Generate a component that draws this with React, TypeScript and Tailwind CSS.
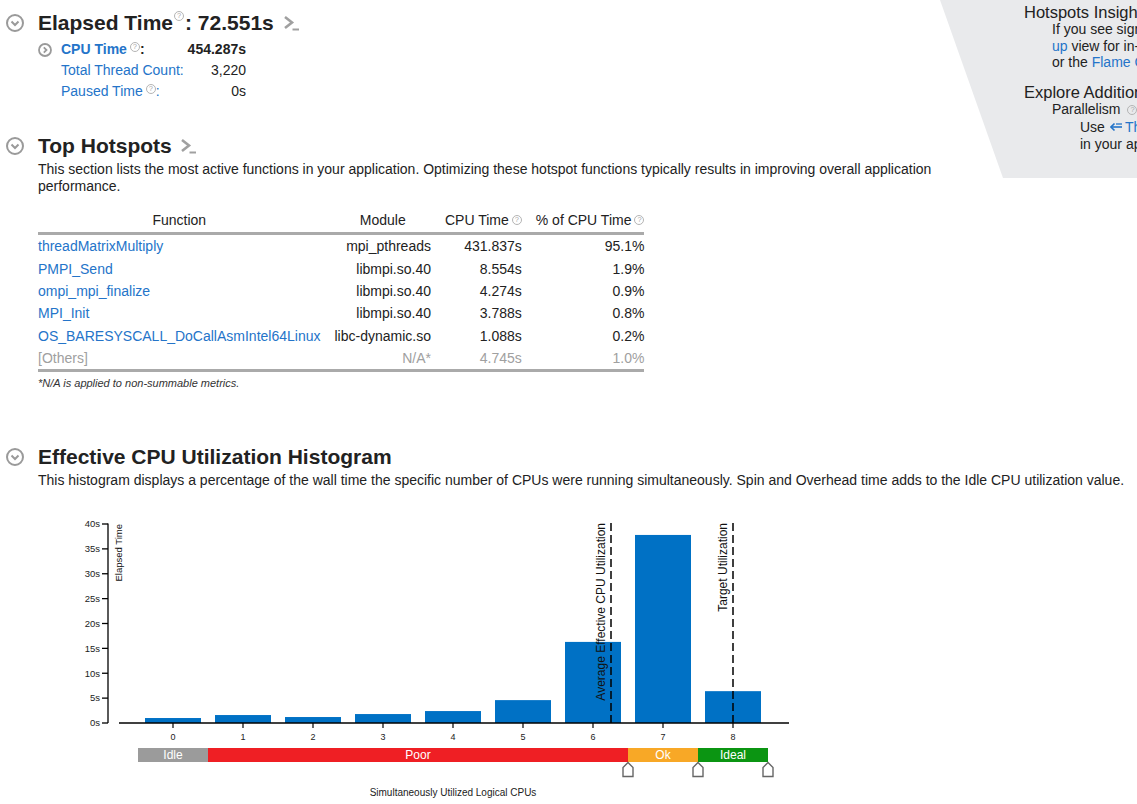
import React from 'react';

const LINK = 'text-[#2474c9]';

function Help({ className = '' }: { className?: string }) {
    return (
        <span
            className={`inline-flex h-[10px] w-[10px] shrink-0 items-center justify-center rounded-full border border-[#b4b4b4] text-[7.5px] font-normal leading-none text-[#a8a8a8] ${className}`}
        >
            ?
        </span>
    );
}

function Toggle() {
    return (
        <svg width="18" height="18" viewBox="0 0 18 18" className="shrink-0">
            <circle cx="9" cy="9" r="8" fill="none" stroke="#9a9a9a" strokeWidth="2" />
            <polyline points="5.5,7.5 9,11 12.5,7.5" fill="none" stroke="#9a9a9a" strokeWidth="2" />
        </svg>
    );
}

function SmallToggle() {
    return (
        <svg width="14" height="14" viewBox="0 0 14 14" className="shrink-0">
            <circle cx="7" cy="7" r="6" fill="none" stroke="#9a9a9a" strokeWidth="1.8" />
            <polyline points="5.8,4.3 8.5,7 5.8,9.7" fill="none" stroke="#9a9a9a" strokeWidth="1.8" />
        </svg>
    );
}

function Prompt() {
    return (
        <svg width="16" height="16" viewBox="0 0 16 16" className="shrink-0">
            <polyline points="1,2 8,7.5 1,13" fill="none" stroke="#a0a0a0" strokeWidth="2.6" />
            <line x1="8.5" y1="14.5" x2="15" y2="14.5" stroke="#a0a0a0" strokeWidth="2" />
        </svg>
    );
}

function SectionTitle({ children }: { children: React.ReactNode }) {
    return (
        <div className="flex h-[24px] items-center pl-[6px]">
            <Toggle />
            <h2 className="ml-[14px] flex items-center whitespace-nowrap text-[21px] font-bold leading-[24px] text-[#222]">
                {children}
            </h2>
        </div>
    );
}

function InsightsPanel() {
    return (
        <div className="absolute right-0 top-0 h-[178px] w-[197px] overflow-hidden bg-[#e9eaec] [clip-path:polygon(0_0,100%_0,100%_100%,63px_100%)]">
            <div className="whitespace-nowrap pl-[84px] pt-[3px] text-[#222]">
                <h3 className="text-[16.5px] leading-[18px]">Hotspots Insights</h3>
                <div className="pl-[28px] text-[14px] leading-[16.5px]">
                    <p>If you see significant hotspots in the Top Hotspots list, switch to the Bottom-</p>
                    <p>
                        <span className={LINK}>up</span> view for in-depth analysis per function. Otherwise, use the Caller/Callee
                    </p>
                    <p>
                        or the <span className={LINK}>Flame Graph</span> view to track critical paths.
                    </p>
                </div>
                <h3 className="mt-[12.5px] text-[16.5px] leading-[18px]">Explore Additional Insights</h3>
                <div className="pl-[28px] text-[14px] leading-[17.5px]">
                    <p className="flex items-center">
                        Parallelism
                        <Help className="ml-[7px]" />
                        <span>: 50.4%</span>
                    </p>
                    <div className="pl-[28px]">
                        <p className="flex items-center">
                            Use
                            <svg width="12" height="10" viewBox="0 0 12 10" className="ml-[5px] mr-[3px] shrink-0">
                                <polyline points="4.5,1.5 1,5 4.5,8.5" fill="none" stroke="#2474c9" strokeWidth="1.6" />
                                <line x1="1.5" y1="5" x2="12" y2="5" stroke="#2474c9" strokeWidth="1.6" />
                                <line x1="6" y1="2" x2="12" y2="2" stroke="#2474c9" strokeWidth="1.3" />
                            </svg>
                            <span className={LINK}>Threading</span>&nbsp;to explore more opportunities
                        </p>
                        <p>in your application.</p>
                    </div>
                </div>
            </div>
        </div>
    );
}

const hotspots = [
    ['threadMatrixMultiply', 'mpi_pthreads', '431.837s', '95.1%'],
    ['PMPI_Send', 'libmpi.so.40', '8.554s', '1.9%'],
    ['ompi_mpi_finalize', 'libmpi.so.40', '4.274s', '0.9%'],
    ['MPI_Init', 'libmpi.so.40', '3.788s', '0.8%'],
    ['OS_BARESYSCALL_DoCallAsmIntel64Linux', 'libc-dynamic.so', '1.088s', '0.2%'],
];

function HotspotTable() {
    const th = 'h-[27px] border-b-[3px] border-[#aaaaaa] p-0 font-normal';
    const td = 'h-[22.4px] p-0';
    const last = 'h-[25.4px] border-b-[3px] border-[#aaaaaa] p-0';
    return (
        <table className="ml-[38px] mt-[13px] border-separate border-spacing-0 whitespace-nowrap text-[14px] leading-[16px] text-[#222]">
            <thead>
                <tr>
                    <th className={`${th} pr-[7px] text-center`}>Function</th>
                    <th className={`${th} px-[7px] text-center`}>Module</th>
                    <th className={`${th} px-[7px] text-right`}>
                        <span className="inline-flex items-center gap-[3px]">
                            CPU Time <Help />
                        </span>
                    </th>
                    <th className={`${th} pl-[7px] text-right`}>
                        <span className="inline-flex items-center gap-[3px]">
                            % of CPU Time <Help />
                        </span>
                    </th>
                </tr>
            </thead>
            <tbody>
                {hotspots.map((r) => (
                    <tr key={r[0]}>
                        <td className={`${td} pr-[7px] ${LINK}`}>{r[0]}</td>
                        <td className={`${td} px-[7px] text-right`}>{r[1]}</td>
                        <td className={`${td} px-[7px] text-right`}>{r[2]}</td>
                        <td className={`${td} pl-[7px] text-right`}>{r[3]}</td>
                    </tr>
                ))}
                <tr className="text-[#a0a0a0]">
                    <td className={`${last} pr-[7px]`}>[Others]</td>
                    <td className={`${last} px-[7px] text-right`}>N/A*</td>
                    <td className={`${last} px-[7px] text-right`}>4.745s</td>
                    <td className={`${last} pl-[7px] text-right`}>1.0%</td>
                </tr>
            </tbody>
        </table>
    );
}

const bars = [1.0, 1.6, 1.2, 1.8, 2.4, 4.6, 16.3, 37.8, 6.4];
const Y0 = 723;
const K = 199 / 40;
const cx = (i: number) => 173 + 70 * i;

function Histogram() {
    const ticks = [0, 5, 10, 15, 20, 25, 30, 35, 40];
    const bands = [
        { label: 'Idle', from: -0.5, to: 0.5, color: '#9b9b9b' },
        { label: 'Poor', from: 0.5, to: 6.5, color: '#ef1f24' },
        { label: 'Ok', from: 6.5, to: 7.5, color: '#f8a826' },
        { label: 'Ideal', from: 7.5, to: 8.5, color: '#0b9512' },
    ];
    return (
        <svg
            width="800"
            height="294"
            viewBox="0 510 800 294"
            className="mt-[21px] block"
            fontFamily="'Liberation Sans', Arial, sans-serif"
        >
            {/* y axis */}
            <line x1="108" y1="523.5" x2="108" y2={Y0} stroke="#000" strokeWidth="1.3" />
            {ticks.map((t) => {
                const y = Y0 - t * K;
                return (
                    <g key={t}>
                        <line x1="102" y1={y} x2="108" y2={y} stroke="#000" strokeWidth="1.3" />
                        <text x="100" y={y + 3.3} fontSize="9.5" textAnchor="end" fill="#222">
                            {t}s
                        </text>
                    </g>
                );
            })}
            <text x="0" y="0" fontSize="9.5" textAnchor="end" fill="#111" transform="translate(122,524) rotate(-90)">
                Elapsed Time
            </text>

            {/* bars */}
            {bars.map((v, i) => (
                <rect key={i} x={cx(i) - 28} y={Y0 - v * K} width="56" height={v * K} fill="#0071c5" />
            ))}

            {/* x axis */}
            <line x1="119" y1={Y0} x2="789" y2={Y0} stroke="#000" strokeWidth="1.3" />
            {bars.map((_, i) => (
                <g key={i}>
                    <line x1={cx(i)} y1={Y0} x2={cx(i)} y2={Y0 + 5} stroke="#000" strokeWidth="1.2" />
                    <text x={cx(i)} y="739.5" fontSize="9" textAnchor="middle" fill="#222">
                        {i}
                    </text>
                </g>
            ))}

            {/* utilization markers */}
            <line x1="611" y1="523" x2="611" y2={Y0} stroke="#000" strokeWidth="1.5" strokeDasharray="8 4" />
            <text x="0" y="0" fontSize="12" textAnchor="end" fill="#111" transform="translate(605,523) rotate(-90)">
                Average Effective CPU Utilization
            </text>
            <line x1="733" y1="523" x2="733" y2={Y0} stroke="#000" strokeWidth="1.5" strokeDasharray="8 4" />
            <text x="0" y="0" fontSize="12" textAnchor="end" fill="#111" transform="translate(727,523) rotate(-90)">
                Target Utilization
            </text>

            {/* bands */}
            {bands.map((b) => {
                const x1 = cx(b.from);
                const x2 = cx(b.to);
                return (
                    <g key={b.label}>
                        <rect x={x1} y="748" width={x2 - x1} height="14" fill={b.color} />
                        <text x={(x1 + x2) / 2} y="759" fontSize="12" textAnchor="middle" fill="#fff">
                            {b.label}
                        </text>
                    </g>
                );
            })}
            {[6.5, 7.5, 8.5].map((p) => {
                const x = cx(p);
                return (
                    <polygon
                        key={p}
                        points={`${x},762.5 ${x + 5},767.5 ${x + 5},776.5 ${x - 5},776.5 ${x - 5},767.5`}
                        fill="#fff"
                        stroke="#666"
                        strokeWidth="1.4"
                    />
                );
            })}
            <text x="453" y="796" fontSize="10" textAnchor="middle" fill="#222">
                Simultaneously Utilized Logical CPUs
            </text>
        </svg>
    );
}

export default function App() {
    return (
        <div className="relative h-[804px] w-[1137px] overflow-hidden bg-white font-['Liberation_Sans',Arial,sans-serif] text-[#222]">
            <InsightsPanel />

            <section className="pt-[11px]">
                <SectionTitle>
                    Elapsed Time
                    <Help className="mx-[1px] -translate-y-[7px]" />
                    : 72.551s
                    <span className="ml-[10px]">
                        <Prompt />
                    </span>
                </SectionTitle>
                <div className="mt-[4px] w-[246px] text-[14px] leading-[21px]">
                    <div className="flex h-[21px] items-center pl-[38px]">
                        <SmallToggle />
                        <span className={`ml-[9px] flex items-center font-bold ${LINK}`}>
                            CPU Time
                            <Help className="ml-[3px] -translate-y-[3px]" />
                            <span className="text-[#222]">:</span>
                        </span>
                        <span className="ml-auto font-bold">454.287s</span>
                    </div>
                    <div className="flex h-[21px] items-center pl-[61px]">
                        <span className={LINK}>Total Thread Count:</span>
                        <span className="ml-auto">3,220</span>
                    </div>
                    <div className="flex h-[21px] items-center pl-[61px]">
                        <span className={`flex items-center ${LINK}`}>
                            Paused Time
                            <Help className="ml-[3px] -translate-y-[3px]" />:
                        </span>
                        <span className="ml-auto">0s</span>
                    </div>
                </div>
            </section>

            <section className="mt-[32px]">
                <SectionTitle>
                    Top Hotspots
                    <span className="ml-[9px]">
                        <Prompt />
                    </span>
                </SectionTitle>
                <p className="ml-[38px] mt-[3px] w-[940px] text-[14px] leading-[17px]">
                    This section lists the most active functions in your application. Optimizing these hotspot functions
                    typically results in improving overall application performance.
                </p>
                <HotspotTable />
                <p className="ml-[38px] mt-[5px] text-[11px] italic leading-[12px] text-[#333]">
                    *N/A is applied to non-summable metrics.
                </p>
            </section>

            <section className="mt-[56px]">
                <SectionTitle>Effective CPU Utilization Histogram</SectionTitle>
                <p className="ml-[38px] mt-[2.5px] whitespace-nowrap text-[14px] leading-[17px]">
                    This histogram displays a percentage of the wall time the specific number of CPUs were running
                    simultaneously. Spin and Overhead time adds to the Idle CPU utilization value.
                </p>
                <Histogram />
            </section>
        </div>
    );
}
